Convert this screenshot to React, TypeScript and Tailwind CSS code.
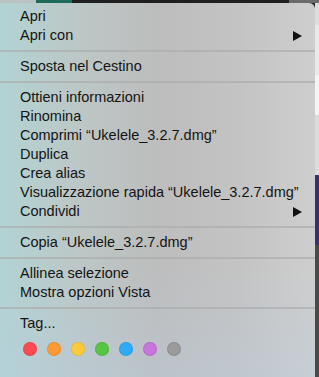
type Item = { label: string; submenu?: boolean };

const groups: Item[][] = [
  [{ label: 'Apri' }, { label: 'Apri con', submenu: true }],
  [{ label: 'Sposta nel Cestino' }],
  [
    { label: 'Ottieni informazioni' },
    { label: 'Rinomina' },
    { label: 'Comprimi “Ukelele_3.2.7.dmg”' },
    { label: 'Duplica' },
    { label: 'Crea alias' },
    { label: 'Visualizzazione rapida “Ukelele_3.2.7.dmg”' },
    { label: 'Condividi', submenu: true },
  ],
  [{ label: 'Copia “Ukelele_3.2.7.dmg”' }],
  [{ label: 'Allinea selezione' }, { label: 'Mostra opzioni Vista' }],
];

const tagColors = ['#fc4a52', '#fd9a34', '#fdca3b', '#57c443', '#2eaaf6', '#c774dc', '#9a9a9a'];

function MenuRow({ item }: { item: Item }) {
  return (
    <div className="flex h-[19px] items-center justify-between pl-5 pr-[13px]">
      <span>{item.label}</span>
      {item.submenu && (
        <svg width="9" height="10" viewBox="0 0 9 10">
          <path d="M0 0 L9 5 L0 10 Z" fill="#111" />
        </svg>
      )}
    </div>
  );
}

function Separator() {
  return <div className="my-[5px] h-[2px] bg-[#acacac]/70" />;
}

export default function App() {
  return (
    <div className="flex h-[377px] w-[319px] flex-col overflow-hidden bg-[#2a2a2a]">
      {/* desktop strip above the menu */}
      <div className="flex h-[3px] shrink-0">
        <div className="w-[36px] bg-[#b9c4c2]" />
        <div className="w-[36px] bg-[#1d6b5b]" />
        <div className="flex-1 bg-[#1f1f1f]" />
        <div className="w-[30px] bg-[#6b6b6b]" />
      </div>

      <div className="flex flex-1">
        {/* context menu */}
        <div
          className="flex w-[315px] flex-col rounded-tr-[6px] pt-[4px] text-[14.5px] leading-[19px] text-[#141414]"
          style={{
            fontFamily: '"Liberation Sans", Arial, sans-serif',
            background:
              'linear-gradient(180deg, rgba(200,222,220,0) 0%, rgba(184,208,226,0) 70%, rgba(184,206,226,0.35) 100%), linear-gradient(90deg, #b2d3d3 0%, #bcc7c6 25%, #bdbdbd 50%, #c3c3c3 75%, #cecece 100%)',
          }}
        >
          {groups.map((group, gi) => (
            <div key={gi}>
              {gi > 0 && <Separator />}
              {group.map((item) => (
                <MenuRow key={item.label} item={item} />
              ))}
            </div>
          ))}
          <Separator />
          <div className="flex h-[19px] items-center pl-5">Tag...</div>
          <div className="mt-[9px] flex gap-[10px] pl-[23px]">
            {tagColors.map((c) => (
              <div
                key={c}
                className="h-[14px] w-[14px] rounded-full"
                style={{ backgroundColor: c, boxShadow: 'inset 0 0 0 1px rgba(0,0,0,0.08)' }}
              />
            ))}
          </div>
        </div>

        {/* desktop strip on the right */}
        <div className="flex flex-1 flex-col">
          <div className="h-[22px] bg-[#dedede]" />
          <div className="h-[50px] bg-[#e9e9e9]" />
          <div className="h-[40px] bg-[#f4f4f4]" />
          <div className="h-[60px] bg-[#dcdcdc]" />
          <div className="h-[70px] bg-[#3b2f6e]" />
          <div className="flex-1 bg-[#4a4a4a]" />
        </div>
      </div>
    </div>
  );
}
